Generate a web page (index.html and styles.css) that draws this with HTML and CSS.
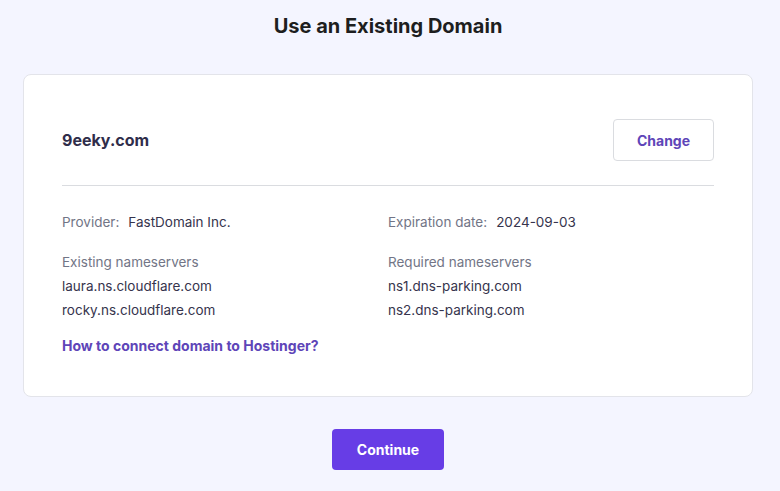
FILE: index.html
```html
<!DOCTYPE html>
<html lang="en">
<head>
<meta charset="utf-8">
<title>Use an Existing Domain</title>
<link rel="stylesheet" href="styles.css">
</head>
<body>
<main class="page">
  <h1 class="title">Use an Existing Domain</h1>
  <section class="card">
    <div class="card-head">
      <h2 class="domain">9eeky.com</h2>
      <button class="btn-outline" type="button">Change</button>
    </div>
    <hr class="divider">
    <div class="details">
      <div class="pair"><span class="label">Provider:</span><span class="value">FastDomain Inc.</span></div>
      <div class="pair"><span class="label">Expiration date:</span><span class="value">2024-09-03</span></div>
      <div class="ns">
        <div class="label">Existing nameservers</div>
        <div class="value">laura.ns.cloudflare.com</div>
        <div class="value">rocky.ns.cloudflare.com</div>
      </div>
      <div class="ns">
        <div class="label">Required nameservers</div>
        <div class="value">ns1.dns-parking.com</div>
        <div class="value">ns2.dns-parking.com</div>
      </div>
    </div>
    <a class="link" href="#">How to connect domain to Hostinger?</a>
  </section>
  <div class="actions">
    <button class="btn-primary" type="button">Continue</button>
  </div>
</main>
</body>
</html>
```
FILE: styles.css
```css
* { box-sizing: border-box; }
html, body { margin: 0; padding: 0; }
body {
  background: #f4f5ff;
  font-family: "Inter", "Liberation Sans", sans-serif;
  color: #36344d;
  font-size: 14px;
  line-height: 24px;
}
.page {
  width: 730px;
  margin-left: 23px;
  display: flex;
  flex-direction: column;
}
.title {
  margin: 14px 0 36px;
  text-align: center;
  font-size: 20px;
  line-height: 24px;
  font-weight: 700;
  color: #1d1e20;
}
.card {
  background: #fff;
  border: 1px solid #e3e4ea;
  border-radius: 8px;
  padding: 44px 38px 38px;
}
.card-head {
  display: flex;
  justify-content: space-between;
  align-items: center;
}
.domain {
  margin: 0;
  font-size: 16px;
  font-weight: 700;
  color: #2f2d4a;
}
.btn-outline {
  width: 101px;
  height: 42px;
  background: #fff;
  border: 1px solid #dadce0;
  border-radius: 4px;
  font-family: inherit;
  font-size: 14px;
  font-weight: 700;
  color: #5e45b8;
}
.divider {
  margin: 24px 0 0;
  border: 0;
  border-top: 1px solid #dadce0;
}
.details {
  display: grid;
  grid-template-columns: 1fr 1fr;
  row-gap: 16px;
  margin-top: 24px;
  font-size: 13.5px;
}
.label { color: #727586; }
.pair .label { margin-right: 9px; }
.value { color: #36344d; }
.link {
  display: block;
  margin-top: 12px;
  font-weight: 700;
  color: #5e45b8;
  text-decoration: none;
}
.actions {
  display: flex;
  justify-content: center;
  margin-top: 32px;
}
.btn-primary {
  width: 112px;
  height: 41px;
  background: #673de6;
  border: 0;
  border-radius: 4px;
  color: #fff;
  font-family: inherit;
  font-size: 14px;
  font-weight: 700;
}
```
